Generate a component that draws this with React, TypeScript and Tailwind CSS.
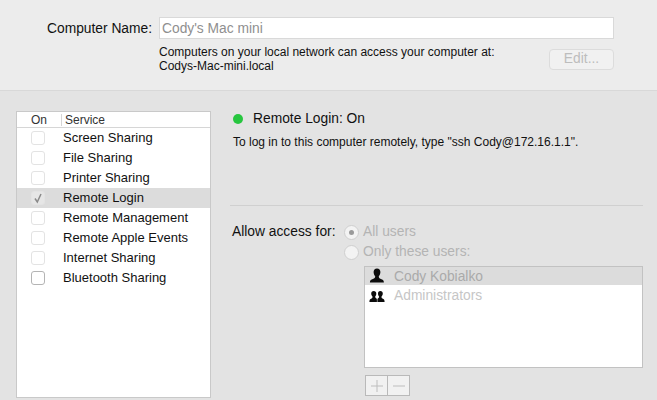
const services = [
  { name: "Screen Sharing", faded: true },
  { name: "File Sharing", faded: true },
  { name: "Printer Sharing", faded: true },
  { name: "Remote Login", faded: true, checked: true, selected: true },
  { name: "Remote Management", faded: true },
  { name: "Remote Apple Events", faded: true },
  { name: "Internet Sharing", faded: true },
  { name: "Bluetooth Sharing", faded: false },
];

const UserIcon = () => (
  <svg width="16" height="16" viewBox="0 0 16 16" className="shrink-0">
    <path
      d="M8 .5c2.200 0 3.400 1.600 3.400 3.600 0 1.800-.8 3.400-1.600 4.200 0 1.500.5 2.100 2.100 2.700 1.600.6 3 1.200 3 3.500H.9c0-2.300 1.400-2.900 3-3.500 1.600-.6 2.300-1.200 2.300-2.700-.8-.8-1.600-2.400-1.600-4.200C4.600 2.100 5.800.5 8 .5z"
      fill="#0c0c0c"
    />
  </svg>
);

const GroupIcon = () => (
  <svg width="16" height="16" viewBox="0 0 16 16" className="shrink-0">
    <path
      d="M4.700 3c1.600 0 2.600 1.100 2.600 2.700 0 1.100-.5 2.200-1.100 2.800 0 .9.300 1.300 1 1.700.5.300.7.600.7 1.200V14H.4c0-2.200.8-3 2.100-3.500.8-.3 1.100-1 1-2-.6-.6-1.300-1.700-1.300-2.800C2.200 4.100 3.100 3 4.700 3z"
      fill="#0c0c0c"
    />
    <path
      d="M11.300 3c1.600 0 2.500 1.100 2.500 2.700 0 1.100-.7 2.200-1.300 2.800-.1 1 .2 1.700 1 2 1.300.5 2.100 1.300 2.100 3.500H8.400v-2.600c0-.6.200-.9.700-1.200.7-.4 1-.8 1-1.700-.6-.6-1.100-1.700-1.100-2.800C9 4.100 9.700 3 11.300 3z"
      fill="#0c0c0c"
    />
  </svg>
);

const Radio = ({ on }: { on?: boolean }) => (
  <span className="w-[15px] h-[15px] rounded-full border border-[#cfcfcf] bg-[#f3f3f3] flex items-center justify-center shrink-0">
    {on && <span className="w-[5px] h-[5px] rounded-full bg-[#9a9a9a]" />}
  </span>
);

export default function App() {
  return (
    <div
      className="w-[657px] h-[400px] overflow-hidden bg-[#e3e3e3] text-[12px] text-[#111]"
      style={{ fontFamily: '"Liberation Sans", Arial, sans-serif' }}
    >
      <div className="h-[91px] bg-[#ececec] border-b border-[#d8d8d8] pt-[17px] pl-[47px] pr-[43px]">
        <div className="flex items-center">
          <span className="w-[112px] text-[13.8px] pt-[2px]">Computer Name:</span>
          <div className="flex-1 h-[22px] bg-white border border-[#d9d9d9] pl-[2px] pt-[2px] flex items-center text-[13.8px] text-[#8f8f8f]">
            Cody's Mac mini
          </div>
        </div>
        <div className="flex pl-[112px] mt-[5px]">
          <div className="flex-1 text-[12px] leading-[14px]">
            <div>Computers on your local network can access your computer at:</div>
            <div>Codys-Mac-mini.local</div>
          </div>
          <div className="w-[65px] h-[21px] mt-[4px] rounded-[4px] bg-[#f1f1f1] border border-[#dcdcdc] flex items-center justify-center text-[13.8px] text-[#bdbdbd]">
            Edit...
          </div>
        </div>
      </div>

      <div className="flex pt-[20px] pl-[16px] pr-[14px]">
        <div className="w-[195px] h-[287px] bg-white border border-[#c9c9c9] shrink-0">
          <div className="flex items-center h-[16px] border-b border-[#d6d6d6] text-[12px] text-[#333]">
            <span className="w-[44px] pl-[14px]">On</span>
            <span className="border-l border-[#d6d6d6] pl-[3px] leading-[12px]">Service</span>
          </div>
          {services.map((s) => (
            <div
              key={s.name}
              className={`flex items-center h-[20px] pl-[14px] ${s.selected ? "bg-[#dcdcdc]" : ""}`}
            >
              <span
                className={`w-[14px] h-[14px] rounded-[3px] border flex items-center justify-center shrink-0 ${
                  s.faded ? "border-[#e3e3e3]" : "border-[#b4b4b4]"
                } ${s.checked ? "bg-[#e6e6e6] border-[#c0c0c0]" : "bg-white"}`}
              >
                {s.checked && (
                  <svg width="12" height="12" viewBox="0 0 12 12">
                    <path d="M3 6.500 5.300 10 9 2" fill="none" stroke="#8a8a8a" strokeWidth="1.500" />
                  </svg>
                )}
              </span>
              <span className="ml-[18px] text-[13px]">{s.name}</span>
            </div>
          ))}
        </div>

        <div className="flex-1 min-w-0 pl-[19px]">
          <div className="flex items-center pl-[3px] h-[16px]">
            <span className="w-[10px] h-[10px] rounded-full bg-[#27c63f]" />
            <span className="ml-[10px] text-[13.8px]">Remote Login: On</span>
          </div>
          <div className="pl-[3px] mt-[8px] text-[12px] leading-[14px]">
            To log in to this computer remotely, type "ssh Cody@172.16.1.1".
          </div>
          <div className="h-px bg-[#d0d0d0] mt-[56px]" />
          <div className="flex pl-[2px] mt-[16px]">
            <span className="w-[112px] text-[13.8px] leading-[20px]">Allow access for:</span>
            <div className="flex-1">
              <div className="flex items-center h-[20px] text-[13.8px] text-[#b4b4b4]">
                <Radio on />
                <span className="ml-[4px]">All users</span>
              </div>
              <div className="flex items-center h-[20px] text-[13.8px] text-[#b4b4b4]">
                <Radio />
                <span className="ml-[4px]">Only these users:</span>
              </div>
              <div className="ml-[20px] mt-[4px] w-[279px] h-[102px] bg-white border border-[#c2c2c2]">
                <div className="flex items-center h-[18px] pl-[4px] bg-[#dcdcdc] text-[13.8px] text-[#aaaaaa]">
                  <UserIcon />
                  <span className="ml-[9px] pt-[2px]">Cody Kobialko</span>
                </div>
                <div className="flex items-center h-[22px] pl-[4px] text-[13.8px] text-[#c6c6c6]">
                  <GroupIcon />
                  <span className="ml-[9px]">Administrators</span>
                </div>
              </div>
              <div className="ml-[21px] mt-[7px] w-[45px] h-[21px] flex border border-[#b9b9b9] bg-[#f1f1f1]">
                <span className="flex-1 flex items-center justify-center border-r border-[#b9b9b9]">
                  <svg width="12" height="12" viewBox="0 0 12 12">
                    <path d="M6 0v12M0 6h12" stroke="#bdbdbd" strokeWidth="1" />
                  </svg>
                </span>
                <span className="flex-1 flex items-center justify-center">
                  <svg width="12" height="12" viewBox="0 0 12 12">
                    <path d="M0 6h12" stroke="#bdbdbd" strokeWidth="1" />
                  </svg>
                </span>
              </div>
            </div>
          </div>
        </div>
      </div>
    </div>
  );
}
